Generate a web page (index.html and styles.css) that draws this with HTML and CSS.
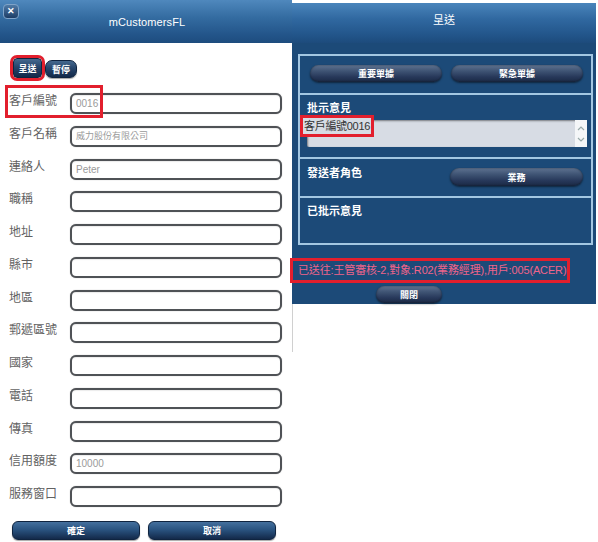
FILE: index.html
```html
<!DOCTYPE html>
<html lang="zh-Hant">
<head>
<meta charset="utf-8">
<title>mCustomersFL</title>
<link rel="stylesheet" href="styles.css">
</head>
<body>
<div class="page">
  <section class="left">
    <header class="hdr">
      <span class="close-x">✕</span>
      <h1 class="title">mCustomersFL</h1>
    </header>
    <div class="toolbar">
      <button class="dbtn send marked">呈送</button>
      <button class="dbtn pause">暫停</button>
    </div>
    <div class="form">
      <div class="row"><span class="lbl">客戶編號</span><div class="inp">0016</div></div>
      <div class="row"><span class="lbl">客戶名稱</span><div class="inp cjk">威力股份有限公司</div></div>
      <div class="row"><span class="lbl">連絡人</span><div class="inp">Peter</div></div>
      <div class="row"><span class="lbl">職稱</span><div class="inp"></div></div>
      <div class="row"><span class="lbl">地址</span><div class="inp"></div></div>
      <div class="row"><span class="lbl">縣市</span><div class="inp"></div></div>
      <div class="row"><span class="lbl">地區</span><div class="inp"></div></div>
      <div class="row"><span class="lbl">郵遞區號</span><div class="inp"></div></div>
      <div class="row"><span class="lbl">國家</span><div class="inp"></div></div>
      <div class="row"><span class="lbl">電話</span><div class="inp"></div></div>
      <div class="row"><span class="lbl">傳真</span><div class="inp"></div></div>
      <div class="row"><span class="lbl">信用額度</span><div class="inp">10000</div></div>
      <div class="row"><span class="lbl">服務窗口</span><div class="inp"></div></div>
      <div class="row-mark"></div>
    </div>
    <div class="actions">
      <button class="dbtn wide">確定</button>
      <button class="dbtn wide">取消</button>
    </div>
  </section>

  <section class="right">
    <header class="hdr2">呈送</header>
    <div class="rbody">
      <div class="box">
        <div class="sec s1">
          <button class="cap">重要單據</button>
          <button class="cap">緊急單據</button>
        </div>
        <div class="sec s2">
          <div class="rlbl">批示意見</div>
          <div class="ta">
            <span class="ta-text">客戶編號0016</span>
            <span class="scroll">
              <svg width="10" height="22" viewBox="0 0 10 22"><path d="M2 7 L5 4 L8 7" fill="none" stroke="#9aa" stroke-width="1.2"/><path d="M2 15 L5 18 L8 15" fill="none" stroke="#9aa" stroke-width="1.2"/></svg>
            </span>
          </div>
        </div>
        <div class="sec s3">
          <div class="rlbl">發送者角色</div>
          <button class="cap role">業務</button>
        </div>
        <div class="sec s4">
          <div class="rlbl">已批示意見</div>
        </div>
      </div>
      <div class="msg">已送往:王管審核-2,對象:R02(業務經理),用戶:005(ACER)</div>
      <button class="cap closebtn">關閉</button>
    </div>
    <div class="tail"></div>
  </section>
</div>
</body>
</html>
```

FILE: styles.css
```css
* { box-sizing: border-box; }
html, body { margin: 0; padding: 0; background: #fff; }
body {
  font-family: "Liberation Sans", "Noto Sans CJK TC", sans-serif;
  width: 598px;
  height: 542px;
  overflow: hidden;
}
button { font-family: inherit; margin: 0; padding: 0; cursor: pointer; }

.page { display: flex; align-items: flex-start; }

/* ---------- left panel ---------- */
.left {
  width: 292px;
  height: 542px;
  display: flex;
  flex-direction: column;
  background: #fff;
}
.hdr {
  height: 43px;
  background: linear-gradient(#4f88bd 0%, #346ca1 40%, #23558a 80%, #1d4c7e 100%);
  display: flex;
  align-items: center;
  justify-content: center;
  position: relative;
}
.close-x {
  position: absolute;
  left: 3px;
  top: 4px;
  width: 16px;
  height: 15px;
  border-radius: 4px;
  background: linear-gradient(#4f7aa6, #1d3d66);
  border: 1px solid #7fa3c8;
  color: #fff;
  font-size: 9px;
  font-weight: bold;
  display: flex;
  align-items: center;
  justify-content: center;
  line-height: 1;
}
.title {
  margin: 0 0 0 2px;
  font-size: 11px;
  font-weight: normal;
  color: #fff;
  letter-spacing: 0.1px;
  padding-top: 1px;
}
.toolbar {
  display: flex;
  align-items: flex-end;
  gap: 3px;
  padding: 15px 0 0 13px;
}
.dbtn {
  border: 1px solid #0f2440;
  color: #fff;
  font-weight: bold;
  font-size: 9px;
  background: linear-gradient(#45698f 0%, #26456b 45%, #13294a 100%);
  box-shadow: 0 1px 1px rgba(0,0,0,0.35);
}
.send {
  width: 29px;
  height: 20px;
  border-radius: 4px;
}
.pause {
  width: 32px;
  height: 18px;
  border-radius: 7px;
}
.marked { outline: 3px solid #e21f2d; outline-offset: 0; }

.form {
  position: relative;
  display: flex;
  flex-direction: column;
  gap: 11.75px;
  padding: 15px 0 0 9px;
}
.row {
  display: flex;
  align-items: flex-start;
  height: 21px;
}
.lbl {
  width: 61px;
  font-size: 12px;
  color: #626262;
  line-height: 14px;
  padding-top: 1px;
}
.inp {
  width: 212px;
  height: 21px;
  border: 2px solid #4f5256;
  border-radius: 6px;
  box-shadow: 0 0 1px #999, inset 0 1px 1px rgba(0,0,0,0.08);
  background: #fff;
  font-size: 10px;
  color: #9a9a9a;
  padding-left: 4px;
  line-height: 17px;
}
.inp.cjk { font-size: 9px; }
.row-mark {
  position: absolute;
  left: 5px;
  top: 7px;
  width: 98px;
  height: 33px;
  border: 3px solid #e21f2d;
}
.actions {
  display: flex;
  gap: 8px;
  padding: 14px 0 0 12px;
}
.wide {
  width: 128px;
  height: 19px;
  border-radius: 6px;
  background: linear-gradient(#44709e 0%, #2a5380 45%, #13294a 100%);
}

/* ---------- right panel ---------- */
.right {
  width: 304px;
  display: flex;
  flex-direction: column;
}
.hdr2 {
  margin-top: 3px;
  height: 40px;
  background: linear-gradient(#4a85bb 0%, #3068a0 40%, #22558a 80%, #1d4b7c 100%);
  color: #fff;
  font-size: 11px;
  text-align: center;
  padding-top: 8px;
}
.rbody {
  height: 261px;
  background: #1c4a78;
  padding: 11px 3px 0 6px;
  display: flex;
  flex-direction: column;
}
.box {
  border: 2px solid #a3c7e2;
  display: flex;
  flex-direction: column;
  height: 191px;
}
.sec { border-top: 2px solid #a3c7e2; }
.sec:first-child { border-top: 0; }
.s1 {
  height: 37px;
  display: flex;
  gap: 9px;
  padding: 9px 0 0 10px;
}
.cap {
  width: 132px;
  height: 17px;
  border: 0;
  border-radius: 9px;
  color: #fff;
  font-weight: bold;
  font-size: 9px;
  background: linear-gradient(#5f7391 0%, #3f5474 35%, #27385a 70%, #1a2944 100%);
  box-shadow: 0 1px 2px rgba(0,0,0,0.5), inset 0 0 2px rgba(0,0,0,0.5);
}
.rlbl {
  color: #fff;
  font-size: 11px;
  font-weight: bold;
  line-height: 14px;
}
.s2 {
  height: 64px;
  padding: 6px 0 0 7px;
}
.ta {
  margin-top: 5px;
  width: 280px;
  height: 27px;
  background: #d7dce4;
  border-radius: 2px;
  box-shadow: inset 1px 1px 2px rgba(0,0,0,0.45);
  display: flex;
  justify-content: space-between;
  align-items: flex-start;
}
.ta-text {
  font-size: 11px;
  color: #333;
  line-height: 14px;
  padding: 1px 1px;
  margin: -2px 0 0 -4px;
  outline: 3px solid #e21f2d;
  background: #d7dce4;
  letter-spacing: -0.3px;
}
.scroll {
  width: 12px;
  height: 27px;
  background: #f4f6f8;
  display: flex;
  align-items: center;
  justify-content: center;
}
.s3 {
  height: 39px;
  display: flex;
  justify-content: space-between;
  padding: 7px 8px 0 7px;
}
.role { width: 133px; height: 18px; margin-top: 2px; }
.s4 {
  flex: 1;
  padding: 6px 0 0 7px;
}
.msg {
  margin: 13px 0 0 -8px;
  width: 280px;
  height: 25px;
  border: 3px solid #e21f2d;
  color: #f0648a;
  font-size: 11px;
  line-height: 19px;
  padding-left: 5px;
  white-space: nowrap;
  letter-spacing: -0.15px;
}
.closebtn {
  margin: 3px 0 0 78px;
  width: 66px;
  height: 17px;
}
.tail {
  height: 48px;
  border-left: 1px solid #d0d0d0;
}
```
